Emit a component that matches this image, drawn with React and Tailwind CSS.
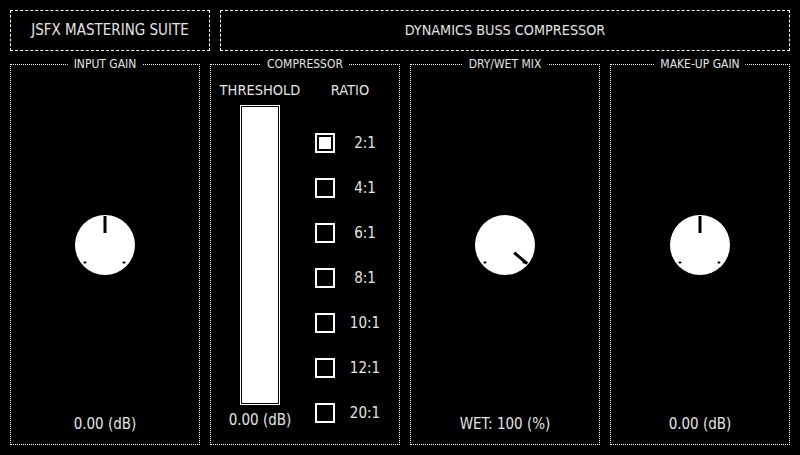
import React from "react";

const FONT = '"DejaVu Sans Condensed", "Liberation Sans Narrow", "DejaVu Sans", sans-serif';

function Knob({ angle }) {
  const rad = (angle * Math.PI) / 180;
  const c = 30;
  const r1 = 12;
  const r2 = 29;
  const x1 = c + r1 * Math.cos(rad);
  const y1 = c - r1 * Math.sin(rad);
  const x2 = c + r2 * Math.cos(rad);
  const y2 = c - r2 * Math.sin(rad);
  return (
    <svg width="60" height="60" viewBox="0 0 60 60" className="block">
      <circle cx="30" cy="30" r="30" fill="#fff" />
      <line x1={x1} y1={y1} x2={x2} y2={y2} stroke="#000" strokeWidth="3" />
      <path d="M8.5 47.5h3M10 46v3" stroke="#000" strokeWidth="1" />
      <path d="M47.5 47.5h3M49 46v3" stroke="#000" strokeWidth="1" />
    </svg>
  );
}

function Panel({ title, width, children }) {
  return (
    <div
      className="relative border border-dotted border-white h-[381px] shrink-0"
      style={{ width }}
    >
      <div className="absolute top-[-8px] left-1/2 -translate-x-1/2 bg-black px-[6px] text-[12px] leading-[14px] text-[#e4e4e4] whitespace-nowrap">
        {title}
      </div>
      {children}
    </div>
  );
}

function KnobPanel({ title, width, angle, value }) {
  return (
    <Panel title={title} width={width}>
      <div className="flex flex-col items-center pt-[150px]">
        <Knob angle={angle} />
        <div className="mt-[140px] text-[15px] leading-[18px] text-[#e4e4e4] whitespace-nowrap">
          {value}
        </div>
      </div>
    </Panel>
  );
}

const ratios = ["2:1", "4:1", "6:1", "8:1", "10:1", "12:1", "20:1"];

export default function App() {
  return (
    <div
      className="w-[800px] h-[455px] bg-black text-[#e4e4e4] overflow-hidden"
      style={{ fontFamily: FONT }}
    >
      <div className="flex gap-[10px] px-[10px] pt-[10px]">
        <div className="w-[200px] h-[41px] border border-dashed border-white flex items-center justify-center text-[15px]">
          JSFX MASTERING SUITE
        </div>
        <div className="w-[570px] h-[41px] border border-dashed border-white flex items-center justify-center text-[14.3px]">
          DYNAMICS BUSS COMPRESSOR
        </div>
      </div>
      <div className="flex gap-[10px] px-[10px] mt-[13px]">
        <KnobPanel title="INPUT GAIN" width={190} angle={90} value="0.00 (dB)" />
        <Panel title="COMPRESSOR" width={190}>
          <div className="flex">
            <div className="w-[98px] flex flex-col items-center pt-[16px]">
              <div className="text-[14.5px] leading-[18px] whitespace-nowrap">THRESHOLD</div>
              <div className="mt-[6px] w-[40px] h-[300px] border border-white p-[1px] bg-black flex">
                <div className="flex-1 bg-white" />
              </div>
              <div className="mt-[6px] text-[15px] leading-[18px] whitespace-nowrap">0.00 (dB)</div>
            </div>
            <div className="flex flex-col pt-[16px]">
              <div className="w-[82px] text-center text-[14.5px] leading-[18px]">RATIO</div>
              <div className="mt-[34px] flex flex-col gap-[25px]">
                {ratios.map((r, i) => (
                  <div key={r} className="flex items-center h-[20px]">
                    <div className="ml-[6px] w-[20px] h-[20px] border-2 border-white p-[2px]">
                      {i === 0 && <div className="w-full h-full bg-white" />}
                    </div>
                    <div className="ml-[10px] w-[40px] text-center text-[15px] leading-[18px]">{r}</div>
                  </div>
                ))}
              </div>
            </div>
          </div>
        </Panel>
        <KnobPanel title="DRY/WET MIX" width={190} angle={-40} value="WET: 100 (%)" />
        <KnobPanel title="MAKE-UP GAIN" width={180} angle={90} value="0.00 (dB)" />
      </div>
    </div>
  );
}
